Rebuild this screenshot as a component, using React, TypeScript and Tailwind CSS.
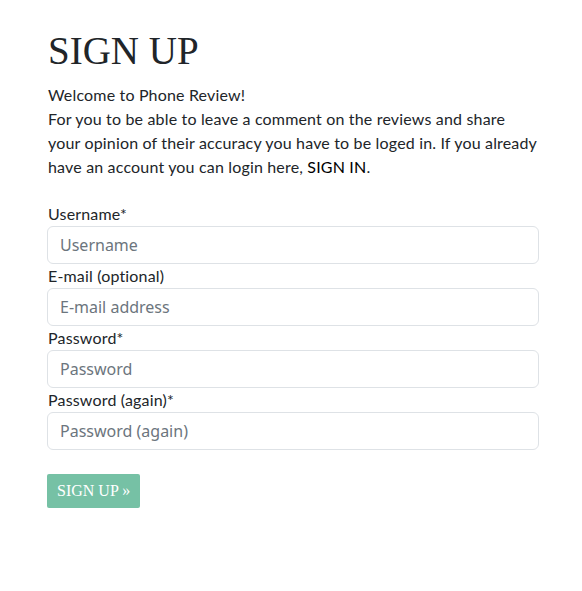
export default function App() {
  const fields = [
    { label: "Username*", ph: "Username", type: "text" },
    { label: "E-mail (optional)", ph: "E-mail address", type: "email" },
    { label: "Password*", ph: "Password", type: "password" },
    { label: "Password (again)*", ph: "Password (again)", type: "password" },
  ];
  return (
    <div className="min-h-[591px] w-full bg-white text-[#212529]" style={{ fontFamily: "Lato, 'Noto Sans', sans-serif" }}>
      <div className="px-[43px] pt-[27px]">
        <div className="w-[492px] ml-[4px]">
          <h1 className="m-0 ml-[1px] text-[39px] leading-[48px] font-normal text-[#212529]" style={{ fontFamily: "'Liberation Serif', serif" }}>
            SIGN UP
          </h1>
          <p className="mt-[8px] ml-[1px] whitespace-nowrap text-[16px] leading-[24px] tracking-[0.17px]">
            Welcome to Phone Review!
            <br />
            For you to be able to leave a comment on the reviews and share
            <br />
            your opinion of their accuracy you have to be loged in. If you already
            <br />
            have an account you can login here, <a className="text-[#000]">SIGN IN</a>.
          </p>
          <form className="mt-[23px] w-[492px]">
            {fields.map((f) => (
              <div key={f.label} className="flex flex-col">
                <label className="ml-[1px] text-[16px] leading-[24px] tracking-[0.17px]">{f.label}</label>
                <input
                  type={f.type}
                  placeholder={f.ph}
                  className="h-[38px] w-full rounded-[6px] border border-[#dee2e6] bg-white px-[12px] text-[16px] text-[#212529] outline-none placeholder:text-[#6c757d]"
                  style={{ fontFamily: "'Noto Sans', sans-serif" }}
                />
              </div>
            ))}
            <button
              type="button"
              className="mt-[24px] h-[34px] rounded-[2px] bg-[#76c1a5] px-[10px] text-[16px] text-white"
              style={{ fontFamily: "'Liberation Serif', serif" }}
            >
              SIGN UP »
            </button>
          </form>
        </div>
      </div>
    </div>
  );
}
